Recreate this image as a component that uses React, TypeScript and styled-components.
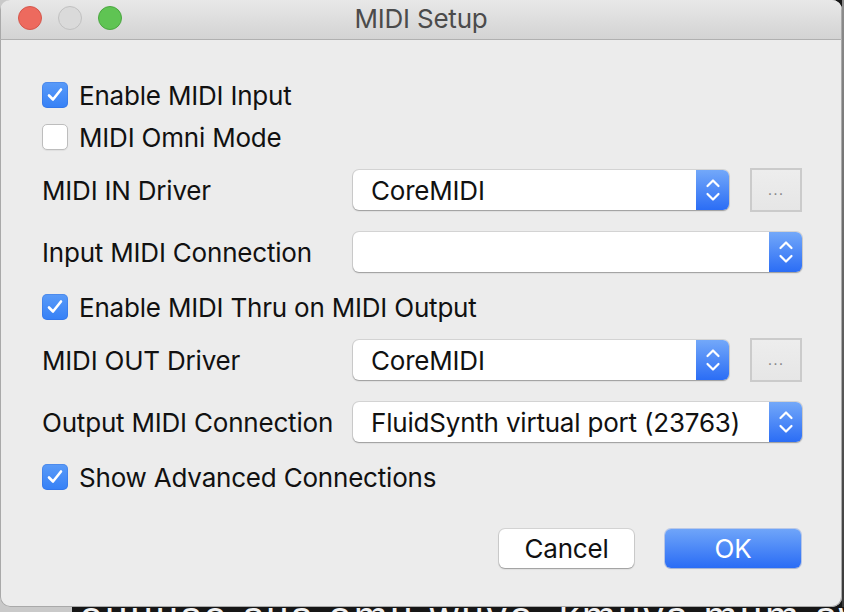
import React from "react";
import styled, { createGlobalStyle, css } from "styled-components";

const Global = createGlobalStyle`
  html, body { margin: 0; padding: 0; background: #161616; }
  body { font-family: Inter, "Noto Sans", "Liberation Sans", sans-serif; }
  * { box-sizing: border-box; }
`;

const Desktop = styled.div`
  width: 844px;
  height: 612px;
  overflow: hidden;
  display: grid;
  grid-template-columns: 842px 2px;
  grid-template-rows: 607px 5px;
  background: linear-gradient(to right, #c9c9c9 0 72px, #161616 72px);
`;

const Window = styled.div`
  grid-column: 1;
  grid-row: 1;
  display: flex;
  flex-direction: column;
  background: #ececec;
  border-radius: 10px;
  box-shadow: inset 0 0 0 1px #a9a9a9;
  overflow: hidden;
`;

const RightEdge = styled.div`
  grid-column: 2;
  grid-row: 1;
  background: linear-gradient(#8d8d8d, #6a6a6a 40%, #3a3a3a);
`;

const BottomStrip = styled.div`
  grid-column: 1 / span 2;
  grid-row: 2;
  overflow: hidden;
  padding-left: 80px;
  display: flex;
  gap: 24px;
`;

const BehindText = styled.span`
  color: #f2f2f2;
  font-family: "Liberation Sans", sans-serif;
  font-size: 40px;
  line-height: 1;
  margin-top: -11px;
  white-space: nowrap;
  letter-spacing: 3px;
`;

const TitleBar = styled.div`
  height: 40px;
  flex: none;
  display: grid;
  grid-template-columns: 1fr auto 1fr;
  align-items: center;
  background: linear-gradient(#e8e8e8, #d3d3d3);
  border-bottom: 1px solid #b0b0b0;
  box-shadow: inset 1px 0 0 #a9a9a9, inset -1px 0 0 #a9a9a9;
  padding: 0 18px;
`;

const Lights = styled.div`
  display: flex;
  gap: 16px;
  margin-top: -3px;
`;

const Light = styled.span<{ $kind: "close" | "min" | "zoom" }>`
  width: 24px;
  height: 24px;
  border-radius: 50%;
  ${(p) =>
    p.$kind === "close"
      ? css`
          background: #ed6a5e;
          border: 1px solid #d4574c;
        `
      : p.$kind === "zoom"
      ? css`
          background: #5fc453;
          border: 1px solid #4ba640;
        `
      : css`
          background: #dadada;
          border: 1px solid #c0c0c0;
        `}
`;

const Title = styled.div`
  font-size: 26px;
  color: #4b4b4b;
  margin-top: -2px;
  letter-spacing: -0.2px;
`;

const Content = styled.div`
  display: flex;
  flex-direction: column;
  padding: 34px 40px 0 42px;
`;

const CheckRow = styled.label<{ $before?: number }>`
  height: 42px;
  margin-top: ${(p) => p.$before ?? 0}px;
  display: flex;
  align-items: center;
  gap: 11px;
  font-size: 26px;
  color: #111;
  letter-spacing: -0.2px;
`;

const Box = styled.span<{ $checked?: boolean }>`
  width: 26px;
  height: 26px;
  border-radius: 5px;
  flex: none;
  display: grid;
  place-items: center;
  ${(p) =>
    p.$checked
      ? css`
          background: linear-gradient(#5a9bf8, #3580f6);
          box-shadow: inset 0 0 0 1px rgba(40, 90, 200, 0.25);
        `
      : css`
          background: #fff;
          border: 1px solid #bdbdbd;
          box-shadow: 0 1px 1px rgba(0, 0, 0, 0.06);
        `}
`;

const FieldRow = styled.div<{ $before?: number }>`
  height: 44px;
  margin-top: ${(p) => p.$before ?? 0}px;
  display: grid;
  grid-template-columns: 311px 1fr;
  align-items: center;
`;

const Label = styled.span`
  font-size: 26px;
  color: #111;
  letter-spacing: -0.2px;
`;

const Controls = styled.div`
  display: flex;
  align-items: center;
  gap: 21px;
`;

const Select = styled.div`
  flex: 1;
  height: 40px;
  display: flex;
  background: #fff;
  border-radius: 6px;
  box-shadow: 0 0 0 1px rgba(0, 0, 0, 0.1), 0 1px 1.5px rgba(0, 0, 0, 0.28);
  overflow: hidden;
`;

const SelectValue = styled.span`
  flex: 1;
  padding-left: 18px;
  display: flex;
  align-items: center;
  font-size: 26px;
  color: #111;
  letter-spacing: -0.2px;
  white-space: nowrap;
`;

const Stepper = styled.span`
  width: 33px;
  flex: none;
  display: grid;
  place-items: center;
  background: linear-gradient(#73a8f9, #2b6df5);
`;

const MoreButton = styled.span`
  width: 52px;
  height: 44px;
  flex: none;
  display: flex;
  justify-content: center;
  align-items: flex-end;
  padding-bottom: 11px;
  border: 2px solid #cbcbcb;
  background: linear-gradient(#ededed, #e6e6e6);
  color: #8a8a8a;
  font-size: 16px;
  letter-spacing: 1px;
  font-family: "Liberation Sans", sans-serif;
`;

const ButtonRow = styled.div`
  margin-top: 31px;
  display: flex;
  justify-content: flex-end;
  gap: 31px;
  padding-right: 1px;
`;

const Button = styled.button<{ $primary?: boolean }>`
  height: 39px;
  width: ${(p) => (p.$primary ? 136 : 135)}px;
  border: none;
  border-radius: 6px;
  font-family: inherit;
  font-size: 26px;
  letter-spacing: -0.2px;
  padding: 0;
  ${(p) =>
    p.$primary
      ? css`
          background: linear-gradient(#6fa5f9, #2a6cf5);
          color: #fff;
          box-shadow: 0 0 0 1px rgba(30, 90, 220, 0.25), 0 1px 1px rgba(0, 0, 0, 0.12);
        `
      : css`
          background: #fff;
          color: #111;
          box-shadow: 0 0 0 1px rgba(0, 0, 0, 0.1), 0 1px 1.5px rgba(0, 0, 0, 0.28);
        `}
`;

const Check = () => (
  <svg width="20" height="20" viewBox="0 0 20 20">
    <path d="M4 10.5 L8 14.5 L16 4.5" fill="none" stroke="#fff" strokeWidth="2.6" strokeLinecap="round" strokeLinejoin="round" />
  </svg>
);

const Chevrons = () => (
  <svg width="16" height="26" viewBox="0 0 16 26">
    <path d="M2.5 9 L8 3.5 L13.5 9" fill="none" stroke="#fff" strokeWidth="2.2" strokeLinecap="round" strokeLinejoin="round" />
    <path d="M2.5 17 L8 22.5 L13.5 17" fill="none" stroke="#fff" strokeWidth="2.2" strokeLinecap="round" strokeLinejoin="round" />
  </svg>
);

const CheckField = ({ label, checked, before }: { label: string; checked?: boolean; before?: number }) => (
  <CheckRow $before={before}>
    <Box $checked={checked}>{checked && <Check />}</Box>
    {label}
  </CheckRow>
);

const SelectField = ({ label, value, more, before }: { label: string; value: string; more?: boolean; before?: number }) => (
  <FieldRow $before={before}>
    <Label>{label}</Label>
    <Controls>
      <Select>
        <SelectValue>{value}</SelectValue>
        <Stepper>
          <Chevrons />
        </Stepper>
      </Select>
      {more && <MoreButton>...</MoreButton>}
    </Controls>
  </FieldRow>
);

export default function App() {
  return (
    <>
      <Global />
      <Desktop>
        <Window>
          <TitleBar>
            <Lights>
              <Light $kind="close" />
              <Light $kind="min" />
              <Light $kind="zoom" />
            </Lights>
            <Title>MIDI Setup</Title>
            <span />
          </TitleBar>
          <Content>
            <CheckField label="Enable MIDI Input" checked />
            <CheckField label="MIDI Omni Mode" />
            <SelectField label="MIDI IN Driver" value="CoreMIDI" more before={10} />
            <SelectField label="Input MIDI Connection" value="" before={18} />
            <CheckField label="Enable MIDI Thru on MIDI Output" checked before={12} />
            <SelectField label="MIDI OUT Driver" value="CoreMIDI" more before={10} />
            <SelectField label="Output MIDI Connection" value="FluidSynth virtual port (23763)" before={18} />
            <CheckField label="Show Advanced Connections" checked before={12} />
            <ButtonRow>
              <Button>Cancel</Button>
              <Button $primary>OK</Button>
            </ButtonRow>
          </Content>
        </Window>
        <RightEdge />
        <BottomStrip>
          <BehindText>ouuuse sus omu wuvo</BehindText>
          <BehindText>kmuvs mum sw w</BehindText>
        </BottomStrip>
      </Desktop>
    </>
  );
}
